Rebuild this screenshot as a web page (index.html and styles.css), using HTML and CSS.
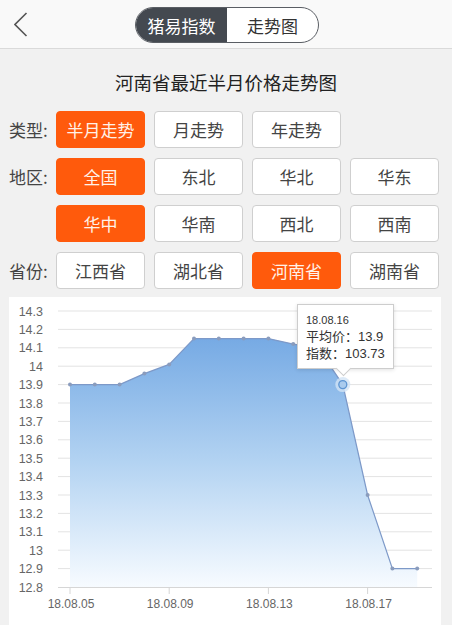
FILE: index.html
```html
<!DOCTYPE html>
<html lang="zh-CN">
<head>
    <meta charset="UTF-8">
    <meta name="viewport" content="width=device-width, initial-scale=1.0">
    <title>猪易指数 - 走势图</title>
    <link rel="stylesheet" href="styles.css">
</head>
<body>
    <header class="topbar">
        <span class="back">
            <svg width="14" height="26" viewBox="0 0 14 26"><path d="M12.5 1 L1 12.5 L12.5 24" fill="none" stroke="#555" stroke-width="1.6"/></svg>
        </span>
        <div class="seg">
            <span class="seg-item on">猪易指数</span>
            <span class="seg-item">走势图</span>
        </div>
    </header>

    <main class="content">
        <h1 class="title">河南省最近半月价格走势图</h1>

        <div class="filters">
            <span class="lbl">类型:</span>
            <button class="opt on">半月走势</button>
            <button class="opt">月走势</button>
            <button class="opt">年走势</button>
            <span></span>

            <span class="lbl">地区:</span>
            <button class="opt on">全国</button>
            <button class="opt">东北</button>
            <button class="opt">华北</button>
            <button class="opt">华东</button>

            <span></span>
            <button class="opt on">华中</button>
            <button class="opt">华南</button>
            <button class="opt">西北</button>
            <button class="opt">西南</button>

            <span class="lbl">省份:</span>
            <button class="opt">江西省</button>
            <button class="opt">湖北省</button>
            <button class="opt on">河南省</button>
            <button class="opt">湖南省</button>
        </div>

        <div class="chart">
            <svg class="plot" width="432" height="328" viewBox="9 297 432 328">
                <defs>
                    <linearGradient id="fill" x1="0" y1="338" x2="0" y2="587" gradientUnits="userSpaceOnUse">
                        <stop offset="0" stop-color="#76aae4"/>
                        <stop offset="0.5" stop-color="#b3d3f2"/>
                        <stop offset="1" stop-color="#f7fbff"/>
                    </linearGradient>
                </defs>
                <g stroke="#e3e3e3" stroke-width="1">
                    <line x1="58" y1="311" x2="432" y2="311"/>
                    <line x1="58" y1="329.4" x2="432" y2="329.4"/>
                    <line x1="58" y1="347.8" x2="432" y2="347.8"/>
                    <line x1="58" y1="366.2" x2="432" y2="366.2"/>
                    <line x1="58" y1="384.6" x2="432" y2="384.6"/>
                    <line x1="58" y1="403" x2="432" y2="403"/>
                    <line x1="58" y1="421.4" x2="432" y2="421.4"/>
                    <line x1="58" y1="439.8" x2="432" y2="439.8"/>
                    <line x1="58" y1="458.2" x2="432" y2="458.2"/>
                    <line x1="58" y1="476.6" x2="432" y2="476.6"/>
                    <line x1="58" y1="495" x2="432" y2="495"/>
                    <line x1="58" y1="513.4" x2="432" y2="513.4"/>
                    <line x1="58" y1="531.8" x2="432" y2="531.8"/>
                    <line x1="58" y1="550.2" x2="432" y2="550.2"/>
                    <line x1="58" y1="568.6" x2="432" y2="568.6"/>
                </g>
                <polygon fill="url(#fill)" points="70,587 70,384.6 94.8,384.6 119.6,384.6 144.4,373.6 169.2,364.4 194,338.6 218.8,338.6 243.6,338.6 268.4,338.6 293.2,344.1 318,347.8 342.8,384.6 367.6,495 392.4,568.6 417.2,568.6 417.2,587"/>
                <g stroke="#d6d6d6" stroke-width="1">
                    <line x1="58" y1="587.5" x2="432" y2="587.5"/>
                    <line x1="70" y1="587" x2="70" y2="594"/>
                    <line x1="169.2" y1="587" x2="169.2" y2="594"/>
                    <line x1="268.4" y1="587" x2="268.4" y2="594"/>
                    <line x1="367.6" y1="587" x2="367.6" y2="594"/>
                </g>
                <polyline fill="none" stroke="#7d99c8" stroke-width="1.2" points="70,384.6 94.8,384.6 119.6,384.6 144.4,373.6 169.2,364.4 194,338.6 218.8,338.6 243.6,338.6 268.4,338.6 293.2,344.1 318,347.8 342.8,384.6 367.6,495 392.4,568.6 417.2,568.6"/>
                <g fill="#8a9cbd">
                    <circle cx="70" cy="384.6" r="2"/>
                    <circle cx="94.8" cy="384.6" r="2"/>
                    <circle cx="119.6" cy="384.6" r="2"/>
                    <circle cx="144.4" cy="373.6" r="2"/>
                    <circle cx="169.2" cy="364.4" r="2"/>
                    <circle cx="194" cy="338.6" r="2"/>
                    <circle cx="218.8" cy="338.6" r="2"/>
                    <circle cx="243.6" cy="338.6" r="2"/>
                    <circle cx="268.4" cy="338.6" r="2"/>
                    <circle cx="293.2" cy="344.1" r="2"/>
                    <circle cx="318" cy="347.8" r="2"/>
                    <circle cx="367.6" cy="495" r="2"/>
                    <circle cx="392.4" cy="568.6" r="2"/>
                    <circle cx="417.2" cy="568.6" r="2"/>
                </g>
                <circle cx="342.8" cy="384.6" r="7.5" fill="#d2e3f5" opacity="0.8"/>
                <circle cx="342.8" cy="384.6" r="4" fill="#a9cbee" stroke="#5d95d2" stroke-width="1.3"/>
                <g class="ylab" text-anchor="end">
                    <text x="43" y="315.5">14.3</text>
                    <text x="43" y="333.9">14.2</text>
                    <text x="43" y="352.3">14.1</text>
                    <text x="43" y="370.7">14</text>
                    <text x="43" y="389.1">13.9</text>
                    <text x="43" y="407.5">13.8</text>
                    <text x="43" y="425.9">13.7</text>
                    <text x="43" y="444.3">13.6</text>
                    <text x="43" y="462.7">13.5</text>
                    <text x="43" y="481.1">13.4</text>
                    <text x="43" y="499.5">13.3</text>
                    <text x="43" y="517.9">13.2</text>
                    <text x="43" y="536.3">13.1</text>
                    <text x="43" y="554.7">13</text>
                    <text x="43" y="573.1">12.9</text>
                    <text x="43" y="591.5">12.8</text>
                </g>
                <g class="xlab" text-anchor="middle">
                    <text x="71" y="607.5">18.08.05</text>
                    <text x="170.2" y="607.5">18.08.09</text>
                    <text x="269.4" y="607.5">18.08.13</text>
                    <text x="368.6" y="607.5">18.08.17</text>
                </g>
            </svg>
            <div class="tip">
                <div class="tip-date">18.08.16</div>
                <div>平均价：13.9</div>
                <div>指数：103.73</div>
            </div>
        </div>
    </main>
</body>
</html>
```

FILE: styles.css
```css
body {
    margin: 0;
    width: 452px;
    height: 625px;
    overflow: hidden;
    background: #f1f1f1;
    font-family: "Noto Sans CJK SC", "Liberation Sans", sans-serif;
    color: #333;
}
.topbar {
    height: 48px;
    background: #f9f9f9;
    border-bottom: 1px solid #dadada;
    display: flex;
    align-items: center;
    justify-content: center;
    position: relative;
}
.back {
    position: absolute;
    left: 14px;
    top: 12px;
    display: flex;
}
.seg {
    display: flex;
    height: 34px;
    border: 1px solid #5a5e64;
    border-radius: 18px;
    overflow: hidden;
    background: #fff;
    margin-left: 2px;
    margin-top: 2px;
}
.seg-item {
    width: 91px;
    display: flex;
    align-items: center;
    justify-content: center;
    font-size: 17px;
    color: #333;
}
.seg-item.on {
    background: #444950;
    color: #fff;
}
.content {
    padding: 0 9px;
}
.title {
    margin: 20px 0 16px;
    font-size: 18.5px;
    font-weight: normal;
    line-height: 26px;
    text-align: center;
    color: #222;
}
.filters {
    display: grid;
    grid-template-columns: 38px repeat(4, 89px);
    grid-auto-rows: 37px;
    column-gap: 9px;
    row-gap: 10px;
}
.lbl {
    font-size: 17px;
    color: #444;
    display: flex;
    align-items: center;
    white-space: nowrap;
}
.opt {
    font-family: inherit;
    font-size: 17px;
    color: #444;
    background: #fff;
    border: 1px solid #cfcfcf;
    border-radius: 4px;
    padding: 0;
    margin: 0;
}
.opt.on {
    background: #ff5a0c;
    border-color: #ff5a0c;
    color: #fff2e8;
}
.chart {
    position: relative;
    margin-top: 8px;
    width: 432px;
    background: #fff;
    height: 330px;
}
.plot {
    display: block;
}
.ylab, .xlab {
    font-family: "Liberation Sans", Arial, sans-serif;
    font-size: 12.5px;
    fill: #666;
}
.xlab {
    font-size: 12px;
}
.tip {
    position: absolute;
    left: 288px;
    top: 7px;
    width: 80px;
    padding: 6px 7px 6px 8px;
    background: #fff;
    border: 1px solid #cdcdcd;
    box-shadow: 0 1px 4px rgba(0, 0, 0, 0.12);
    font-size: 13px;
    line-height: 17px;
    color: #333;
    font-family: "Liberation Sans", "Noto Sans CJK SC", sans-serif;
}
.tip-date {
    font-size: 11px;
    line-height: 15px;
    margin-top: 2px;
}
.tip::after {
    content: "";
    position: absolute;
    left: 40px;
    bottom: -6px;
    width: 10px;
    height: 10px;
    background: #fff;
    border-right: 1px solid #cdcdcd;
    border-bottom: 1px solid #cdcdcd;
    transform: rotate(45deg);
}
```
